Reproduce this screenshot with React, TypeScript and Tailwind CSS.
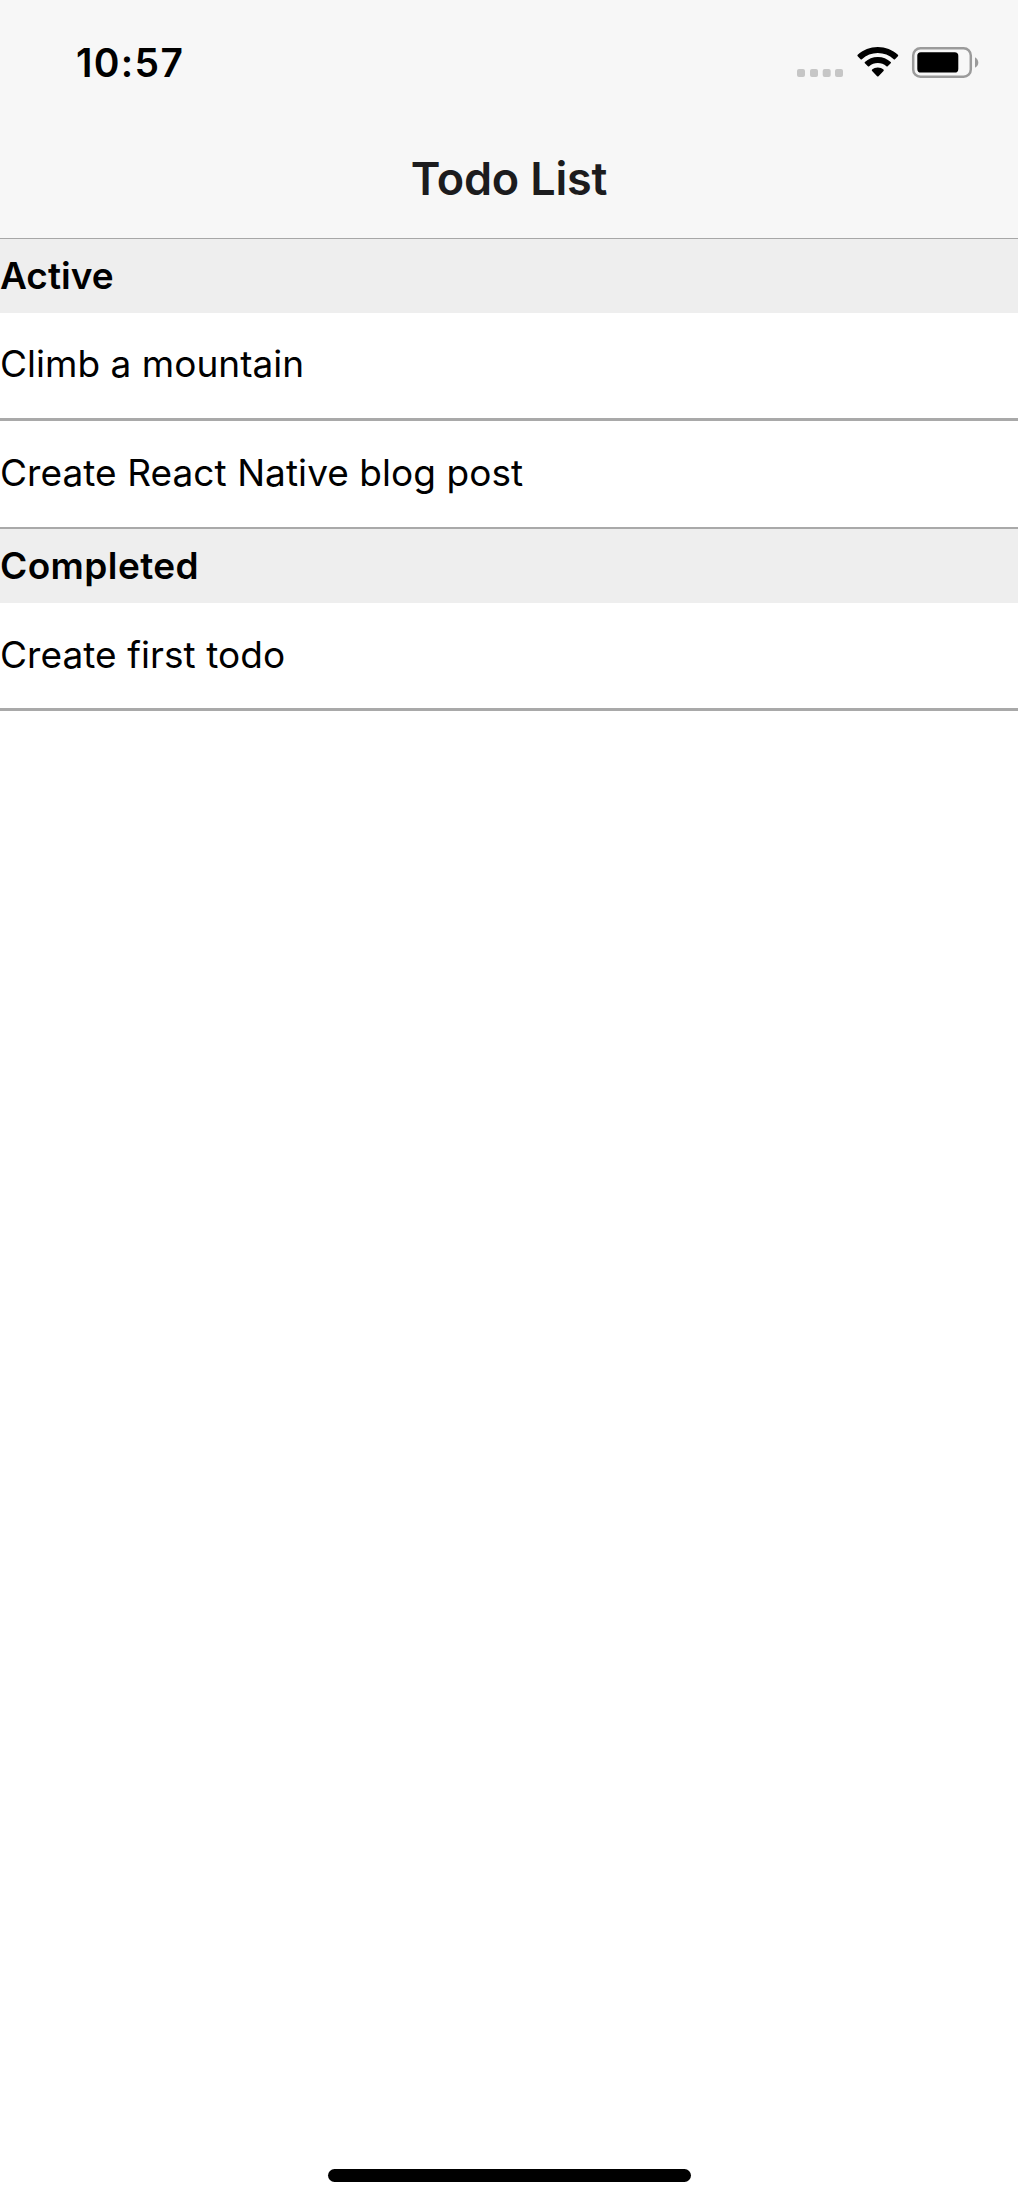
const sections = [
  {
    title: "Active",
    titleClass: "tracking-[0px]",
    items: [
      { text: "Climb a mountain", row: "h-[108px] border-b-3 leading-[101px] tracking-[0.02px]" },
      { text: "Create React Native blog post", row: "h-[108px] border-b-2 leading-[103px] tracking-[0.06px]" },
    ],
  },
  {
    title: "Completed",
    titleClass: "tracking-[0.4px]",
    items: [{ text: "Create first todo", row: "h-[108px] border-b-3 leading-[103px] tracking-[0.06px]" }],
  },
];

function StatusIcons() {
  return (
    <svg className="h-[70px] w-[210px]" viewBox="0 0 210 70" aria-hidden="true">
      <g fill="#c6c6c6">
        <rect x="17" y="39" width="8" height="8" rx="2" />
        <rect x="30" y="39" width="8" height="8" rx="2" />
        <rect x="42.7" y="39" width="8" height="8" rx="2" />
        <rect x="55" y="39" width="8" height="8" rx="2" />
      </g>
      <path d="M97.8 17C105.500 17 112.500 19.900 117.900 24.800Q118.600 25.500 117.900 26.200L115 29.200Q114.400 29.800 113.700 29.200A23.200 23.200 0 0 0 81.900 29.200Q81.200 29.800 80.600 29.200L77.700 26.200Q77 25.500 77.700 24.800C83.100 19.900 90.100 17 97.800 17Z" />
      <path d="M97.800 26.900C102.800 26.900 107.300 28.800 110.700 31.900Q111.400 32.600 110.700 33.300L107.700 36.300Q107.100 36.900 106.400 36.300A13 13 0 0 0 89.200 36.300Q88.500 36.900 87.900 36.300L84.900 33.300Q84.200 32.600 84.900 31.900C88.300 28.800 92.800 26.900 97.800 26.900Z" />
      <path d="M97.800 37.500C100 37.500 102 38.200 103.500 39.500Q104.200 40.200 103.500 40.900L98.500 46.200Q97.800 46.900 97.100 46.200L92.100 40.900Q91.400 40.200 92.100 39.500C93.600 38.200 95.600 37.500 97.800 37.500Z" />
      <rect x="133.200" y="18.200" width="57.600" height="28.600" rx="7.200" fill="none" stroke="#9b9b9b" strokeWidth="2.500" />
      <rect x="137.300" y="22.200" width="41" height="20.300" rx="3.600" />
      <path d="M195 27.200C197 28.200 198.300 30.200 198.300 32.500S197 36.800 195 37.800Z" fill="#9b9b9b" />
    </svg>
  );
}

export default function App() {
  return (
    <div className="flex h-[2204px] w-[1018px] flex-col overflow-hidden bg-white font-['Inter',sans-serif] text-black">
      <header className="h-[239px] shrink-0 border-b border-[#a7a7a7] bg-[#f7f7f7]">
        <div className="flex h-[130px] items-start justify-between pt-[30px] pr-[28px] pl-[76px]">
          <time className="text-[39px] leading-[65px] font-semibold tracking-[1.3px]">10:57</time>
          <StatusIcons />
        </div>
        <h1 className="text-center text-[45px] leading-[97px] font-semibold tracking-[-0.2px] text-[#1c1c1e]">Todo List</h1>
      </header>
      <main className="flex-1 text-[37px]">
        {sections.map((section) => (
          <section key={section.title}>
            <h2 className={`h-[74px] bg-[#eeeeee] leading-[73px] font-semibold ${section.titleClass}`}>
              {section.title}
            </h2>
            <ul>
              {section.items.map((item) => (
                <li key={item.text} className={`border-[#a9a9a9] whitespace-nowrap ${item.row}`}>
                  {item.text}
                </li>
              ))}
            </ul>
          </section>
        ))}
      </main>
      <footer className="flex h-[35px] shrink-0 justify-center pl-[1px]">
        <div className="h-[13px] w-[363px] rounded-full bg-black" />
      </footer>
    </div>
  );
}
